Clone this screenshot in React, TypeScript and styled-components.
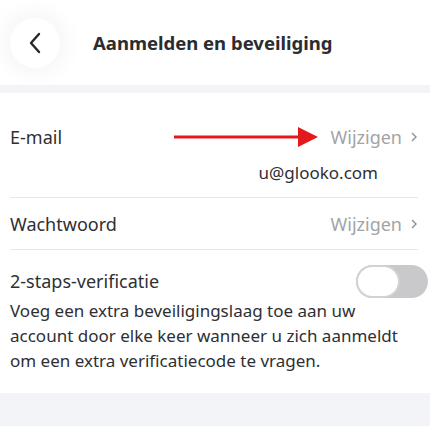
import React, { useState } from "react";
import styled, { createGlobalStyle } from "styled-components";

const GlobalStyle = createGlobalStyle`
  html, body {
    margin: 0;
    padding: 0;
    background: #ffffff;
  }
  body {
    font-family: "Noto Sans", "Liberation Sans", sans-serif;
    color: #2e2f33;
  }
`;

const Page = styled.div`
  width: 430px;
  height: 426px;
  display: flex;
  flex-direction: column;
  background: #ffffff;
  overflow: hidden;
`;

// header
const Header = styled.header`
  height: 85px;
  display: flex;
  align-items: center;
  padding-left: 10px;
`;

const BackButton = styled.button`
  width: 50px;
  height: 50px;
  border-radius: 50%;
  border: none;
  background: #ffffff;
  box-shadow: 0 0 22px 6px rgba(0, 0, 0, 0.045);
  display: flex;
  align-items: center;
  justify-content: center;
  padding: 0;
  cursor: pointer;
`;

const Title = styled.h1`
  margin: 0 0 0 33px;
  font-size: 18.5px;
  font-weight: 700;
  color: #2b2c30;
`;

const Band = styled.div<{ grow?: boolean }>`
  background: #f3f4f8;
  height: ${(props) => (props.grow ? "auto" : "8px")};
  flex: ${(props) => (props.grow ? 1 : "none")};
`;

// list
const List = styled.section`
  padding: 0 12px 0 10px;
  display: flex;
  flex-direction: column;
`;

const Row = styled.div<{ top: number; height: number }>`
  display: flex;
  align-items: center;
  padding-top: ${(props) => props.top}px;
  height: ${(props) => props.height}px;
`;

const Label = styled.span`
  font-size: 18px;
  color: #2e2f33;
  flex: 1;
`;

const Action = styled.button`
  border: none;
  background: none;
  padding: 0;
  display: flex;
  align-items: center;
  gap: 8px;
  font-family: inherit;
  font-size: 18px;
  color: #a3a3a6;
  cursor: pointer;
`;

const Value = styled.div`
  text-align: right;
  padding-right: 40px;
  font-size: 17px;
  color: #2e2f33;
  height: 25px;
  line-height: 25px;
`;

const Divider = styled.hr`
  margin: 0;
  border: none;
  border-top: 1px solid #e7e7ef;
`;

const Arrow = styled.svg`
  margin-right: 13px;
  flex: none;
`;

const Switch = styled.button<{ on: boolean }>`
  width: 72px;
  height: 33px;
  border-radius: 17px;
  border: none;
  padding: 0;
  margin-right: -10px;
  background: ${(props) => (props.on ? "#2f7df6" : "#c9c9cb")};
  position: relative;
  cursor: pointer;
`;

const Knob = styled.span<{ on: boolean }>`
  position: absolute;
  top: 0;
  left: ${(props) => (props.on ? "28px" : "0")};
  width: 44px;
  height: 33px;
  box-sizing: border-box;
  border-radius: 17px;
  background: #ffffff;
  border: 2px solid #d2d2d4;
`;

const Description = styled.p`
  margin: 0;
  padding-right: 10px;
  font-size: 17px;
  line-height: 25px;
  color: #2e2f33;
`;

const Chevron = () => (
  <svg width="8" height="12" viewBox="0 0 8 12">
    <path d="M2 2l4 4-4 4" fill="none" stroke="#8e8e92" strokeWidth="1.4" />
  </svg>
);

export default function App() {
  const [twoFactor, setTwoFactor] = useState(false);

  return (
    <Page>
      <GlobalStyle />
      <Header>
        <BackButton aria-label="back">
          <svg width="14" height="22" viewBox="0 0 14 22">
            <path
              d="M11 2L3 11l8 9"
              fill="none"
              stroke="#26272b"
              strokeWidth="2.4"
              strokeLinecap="round"
              strokeLinejoin="round"
            />
          </svg>
        </BackButton>
        <Title>Aanmelden en beveiliging</Title>
      </Header>
      <Band />
      <List>
        <Row top={31} height={26}>
          <Label>E-mail</Label>
          <Arrow width="144" height="22" viewBox="0 0 144 22">
            <path d="M0 11h126" stroke="#e3191c" strokeWidth="3.2" />
            <path d="M124 1l20 10-20 10z" fill="#e3191c" />
          </Arrow>
          <Action>
            Wijzigen
            <Chevron />
          </Action>
        </Row>
        <Value style={{ marginTop: 10 }}>u@glooko.com</Value>
        <div style={{ height: 12 }} />
        <Divider />
        <Row top={0} height={51}>
          <Label>Wachtwoord</Label>
          <Action>
            Wijzigen
            <Chevron />
          </Action>
        </Row>
        <Divider />
        <Row top={14} height={34}>
          <Label>2-staps-verificatie</Label>
          <Switch on={twoFactor} onClick={() => setTwoFactor(!twoFactor)}>
            <Knob on={twoFactor} />
          </Switch>
        </Row>
        <Description>
          Voeg een extra beveiligingslaag toe aan uw account door elke keer
          wanneer u zich aanmeldt om een extra verificatiecode te vragen.
        </Description>
      </List>
      <div style={{ height: 20 }} />
      <Band grow />
    </Page>
  );
}
